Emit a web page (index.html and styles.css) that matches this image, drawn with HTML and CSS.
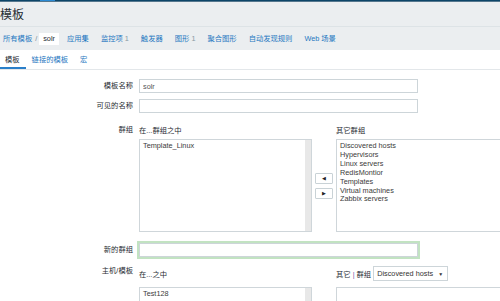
FILE: index.html
```html
<!DOCTYPE html>
<html lang="zh">
<head>
    <meta charset="UTF-8">
    <meta name="viewport" content="width=device-width, initial-scale=1.0">
    <title>模板</title>
    <link rel="stylesheet" href="styles.css">
</head>
<body>
    <div class="topline"><span class="topline-mark"></span></div>

    <div class="header">
        <h1 class="title">模板</h1>
        <div class="nav">
            <a class="nav-first">所有模板</a>
            <span class="nav-sep">/</span>
            <span class="nav-item nav-current">solr</span>
            <a class="nav-item">应用集</a>
            <a class="nav-item">监控项 <span class="count">1</span></a>
            <a class="nav-item">触发器</a>
            <a class="nav-item">图形 <span class="count">1</span></a>
            <a class="nav-item">聚合图形</a>
            <a class="nav-item">自动发现规则</a>
            <a class="nav-item">Web 场景</a>
        </div>
    </div>

    <div class="tabs">
        <span class="tab tab-active">模板</span>
        <a class="tab">链接的模板</a>
        <a class="tab">宏</a>
    </div>

    <div class="form">
        <div class="row row-name">
            <label class="label">模板名称</label>
            <input class="text-input" type="text" value="solr">
        </div>

        <div class="row row-visible">
            <label class="label">可见的名称</label>
            <input class="text-input" type="text" value="">
        </div>

        <div class="row row-groups">
            <label class="label label-top">群组</label>
            <div class="twin">
                <div class="twin-col">
                    <div class="twin-head">在...群组之中</div>
                    <div class="listbox listbox-left">
                        <div class="list-items">
                            <div>Template_Linux</div>
                        </div>
                        <div class="track"></div>
                    </div>
                </div>
                <div class="twin-buttons">
                    <button class="arrow-btn">&#9664;</button>
                    <button class="arrow-btn">&#9654;</button>
                </div>
                <div class="twin-col">
                    <div class="twin-head">其它群组</div>
                    <div class="listbox listbox-right">
                        <div class="list-items">
                            <div>Discovered hosts</div>
                            <div>Hypervisors</div>
                            <div>Linux servers</div>
                            <div>RedisMontior</div>
                            <div>Templates</div>
                            <div>Virtual machines</div>
                            <div>Zabbix servers</div>
                        </div>
                    </div>
                </div>
            </div>
        </div>

        <div class="row row-newgroup">
            <label class="label">新的群组</label>
            <input class="text-input text-input-focus" type="text" value="">
        </div>

        <div class="row row-hosts">
            <label class="label label-hosts">主机/模板</label>
            <div class="twin">
                <div class="twin-col">
                    <div class="twin-head twin-head-tall">在...之中</div>
                    <div class="listbox listbox-left listbox-bottom">
                        <div class="list-items">
                            <div>Test128</div>
                        </div>
                        <div class="track"></div>
                    </div>
                </div>
                <div class="twin-buttons"></div>
                <div class="twin-col">
                    <div class="twin-head twin-head-tall">
                        <span class="filter-label">其它 <span class="pipe">|</span> 群组</span>
                        <span class="select"><span>Discovered hosts</span><span class="caret">&#9660;</span></span>
                    </div>
                    <div class="listbox listbox-right listbox-bottom">
                        <div class="list-items"></div>
                    </div>
                </div>
            </div>
        </div>
    </div>
</body>
</html>
```

FILE: styles.css
```css
* {
    box-sizing: border-box;
}

body {
    margin: 0;
    width: 500px;
    height: 301px;
    overflow: hidden;
    background: #fff;
    font-family: "Liberation Sans", "Noto Sans CJK SC", sans-serif;
    font-size: 7.3px;
    color: #1f2c33;
}

a {
    color: #1f78c1;
    text-decoration: none;
}

.topline {
    height: 2px;
    background: linear-gradient(#0c4568 0, #0c4568 1px, #55778e 1px);
}

.topline-mark {
    display: block;
    margin-left: 40px;
    width: 15px;
    height: 1px;
    background: #2a8ad4;
}

.header {
    background: #ebeef0;
}

.title {
    margin: 0;
    height: 25px;
    padding-top: 1px;
    line-height: 24px;
    font-size: 12px;
    font-weight: normal;
    color: #1f2c33;
    border-bottom: 1px solid #dde3e6;
}

.nav {
    display: flex;
    align-items: center;
    height: 23px;
    padding-left: 3px;
    white-space: nowrap;
}

.nav-first {
    line-height: 12px;
}

.nav-sep {
    margin: 0 2px 0 3px;
    color: #768d99;
}

.nav-item {
    padding: 0 4px;
    margin-right: 4px;
    line-height: 12px;
}

.nav-current {
    background: #fff;
    color: #1f2c33;
}

.count {
    color: #8a9aa3;
}

.tabs {
    display: flex;
    height: 20px;
    border-bottom: 1px solid #e3e7ea;
}

.tab {
    padding: 2px 6px 0 6px;
    line-height: 15px;
    height: 19px;
    border-bottom: 2px solid transparent;
}

.tab-active {
    padding-left: 5px;
    color: #1f2c33;
    border-bottom-color: #2a7fc9;
}

.form {
    padding-top: 9px;
}

.row {
    display: flex;
    align-items: flex-start;
}

.label {
    width: 139px;
    padding-right: 6px;
    text-align: right;
    line-height: 14px;
    flex-shrink: 0;
}

.label-top {
    line-height: 11px;
}

.label-hosts {
    line-height: 9px;
}

.row-visible {
    margin-top: 6px;
}

.row-groups {
    margin-top: 11px;
}

.row-newgroup {
    margin-top: 11px;
}

.row-hosts {
    margin-top: 9px;
}

.text-input {
    width: 279px;
    height: 14px;
    margin: 0;
    padding: 0 3px;
    border: 1px solid #cdd5d9;
    border-radius: 0;
    font-family: inherit;
    font-size: 7.3px;
    color: #555;
    outline: none;
}

.text-input-focus {
    box-shadow: 0 0 0 2px #c2e3c2;
}

.twin {
    display: flex;
}

.twin-col {
    display: flex;
    flex-direction: column;
}

.twin-head {
    display: flex;
    align-items: center;
    height: 11px;
    margin-bottom: 4px;
    white-space: nowrap;
}

.twin-head-tall {
    height: 15px;
    margin-bottom: 6px;
}

.filter-label {
    white-space: nowrap;
}

.pipe {
    color: #6f5aa8;
}

.select {
    display: flex;
    align-items: center;
    justify-content: space-between;
    margin-left: 2px;
    width: 75px;
    height: 15px;
    padding: 0 4px 0 3px;
    border: 1px solid #cdd5d9;
    background: #fff;
    color: #333;
}

.caret {
    font-size: 5px;
    color: #333;
}

.listbox {
    display: flex;
    width: 173px;
    height: 93px;
    border: 1px solid #cfd6da;
    background: #fff;
    color: #3b3b3b;
}

.listbox-bottom {
    height: 40px;
}

.list-items {
    flex: 1;
    padding: 2px 3px;
    line-height: 8.9px;
}

.track {
    width: 6px;
    background: #e8e8e8;
}

.twin-buttons {
    display: flex;
    flex-direction: column;
    justify-content: center;
    gap: 4px;
    width: 24px;
    padding-left: 3px;
    padding-top: 15px;
}

.arrow-btn {
    width: 18px;
    height: 11px;
    padding: 0;
    border: 1px solid #c9d2d6;
    border-radius: 1px;
    background: #fff;
    color: #222;
    font-size: 5px;
    line-height: 9px;
    font-family: "DejaVu Sans", sans-serif;
}
```
